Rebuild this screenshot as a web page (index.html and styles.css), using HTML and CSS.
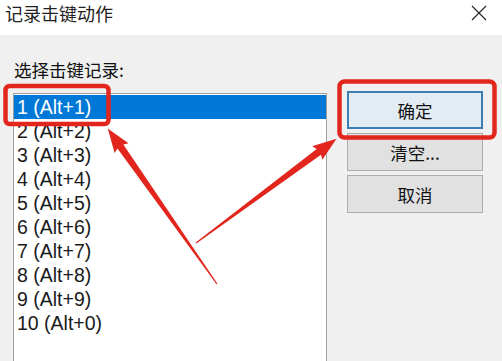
FILE: index.html
```html
<!DOCTYPE html>
<html lang="zh-CN">
<head>
<meta charset="utf-8">
<title>记录击键动作</title>
<link rel="stylesheet" href="styles.css">
</head>
<body>
<div class="dialog">
  <div class="titlebar">
    <span class="title">记录击键动作</span>
    <span class="close" aria-label="关闭">
      <svg width="16" height="16" viewBox="0 0 16 16"><path d="M1 1 L15 15 M15 1 L1 15" stroke="#222" stroke-width="1.1" fill="none"/></svg>
    </span>
  </div>
  <div class="content">
    <div class="left">
      <div class="label">选择击键记录:</div>
      <ul class="listbox">
        <li class="item selected">1 (Alt+1)</li>
        <li class="item">2 (Alt+2)</li>
        <li class="item">3 (Alt+3)</li>
        <li class="item">4 (Alt+4)</li>
        <li class="item">5 (Alt+5)</li>
        <li class="item">6 (Alt+6)</li>
        <li class="item">7 (Alt+7)</li>
        <li class="item">8 (Alt+8)</li>
        <li class="item">9 (Alt+9)</li>
        <li class="item">10 (Alt+0)</li>
      </ul>
    </div>
    <div class="buttons">
      <button class="btn default">确定</button>
      <button class="btn">清空...</button>
      <button class="btn">取消</button>
    </div>
  </div>
  <svg class="annot" width="502" height="361" viewBox="0 0 502 361">
    <rect x="5.5" y="86" width="103" height="38" rx="4" fill="none" stroke="#e2261e" stroke-width="4.5"/>
    <rect x="339.5" y="81.5" width="155" height="56" rx="5" fill="none" stroke="#e2261e" stroke-width="4.5"/>
    <g fill="#e2261e">
      <polygon transform="translate(217,284) rotate(-125.1)" points="0,-0.6 168,-3.6 166,-8.5 190,0 166,8.5 168,3.6 0,0.6"/>
      <polygon transform="translate(196,243) rotate(-36.6)" points="0,-0.6 153,-3.6 151,-8.5 175,0 151,8.5 153,3.6 0,0.6"/>
    </g>
  </svg>
</div>
</body>
</html>
```
FILE: styles.css
```css
* { box-sizing: border-box; }
html, body {
  margin: 0;
  padding: 0;
  width: 502px;
  height: 361px;
  overflow: hidden;
  background: #f0f0f0;
}
.dialog {
  position: relative;
  width: 502px;
  height: 361px;
  overflow: hidden;
  font-family: "Liberation Sans", "Noto Sans CJK SC", sans-serif;
  color: #1a1a1a;
}
.titlebar {
  height: 35px;
  background: #ffffff;
  display: flex;
  justify-content: space-between;
  align-items: flex-start;
  padding: 2px 15px 0 5px;
}
.title {
  font-family: "Noto Sans CJK SC", sans-serif;
  font-size: 18px;
  line-height: 22px;
  color: #222;
}
.close {
  display: flex;
  margin-top: 3px;
}
.content {
  display: flex;
  align-items: flex-start;
  padding-left: 13px;
}
.left {
  width: 314px;
  display: flex;
  flex-direction: column;
}
.label {
  font-family: "Noto Sans CJK SC", sans-serif;
  font-size: 17.5px;
  line-height: 24px;
  margin-top: 23px;
  padding-left: 1px;
  color: #111;
}
.listbox {
  list-style: none;
  margin: 11px 0 0 0;
  padding: 1px 0 0 0;
  height: 268px;
  background: #ffffff;
  border: 1px solid #a0a0a0;
  border-bottom: none;
}
.item {
  height: 24px;
  line-height: 24px;
  font-size: 19.5px;
  padding-left: 3px;
  color: #1a1a1a;
}
.item.selected {
  background: #0078d7;
  color: #ffffff;
}
.buttons {
  display: flex;
  flex-direction: column;
  gap: 4px;
  margin-left: 20px;
  margin-top: 56px;
  width: 136px;
}
.btn {
  height: 38px;
  font-family: "Noto Sans CJK SC", sans-serif;
  font-size: 17.5px;
  color: #111;
  background: #e1e1e1;
  border: 1px solid #adadad;
  padding: 0;
}
.btn.default {
  background: #e3ecf3;
  border: 2px solid #3d7fb3;
}
.annot {
  position: absolute;
  left: 0;
  top: 0;
  pointer-events: none;
}
```
